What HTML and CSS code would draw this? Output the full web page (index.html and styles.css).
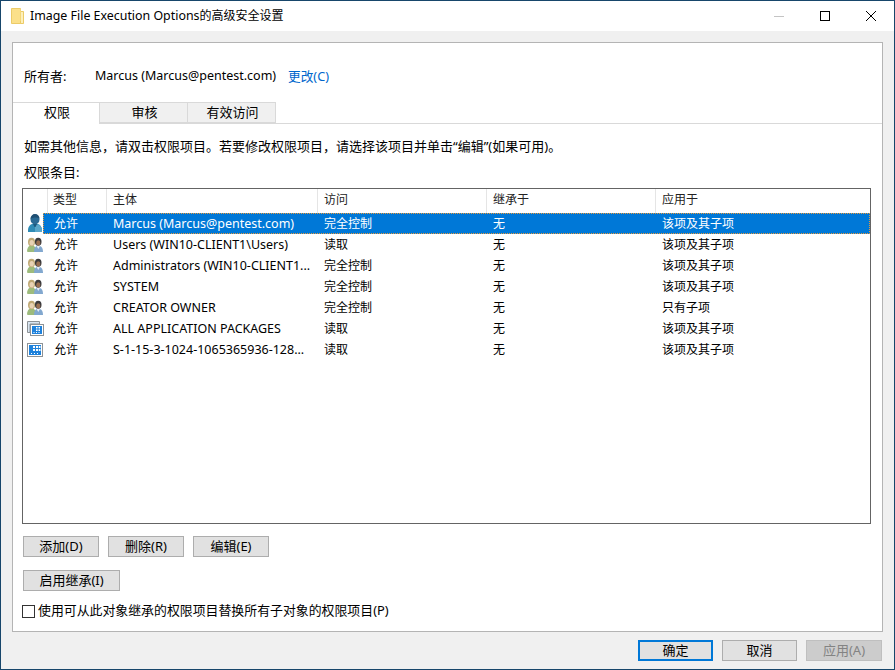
FILE: index.html
```html
<!DOCTYPE html>
<html lang="zh">
<head>
<meta charset="utf-8">
<title>Image File Execution Options的高级安全设置</title>
<link rel="stylesheet" href="styles.css">
</head>
<body>
<svg class="defs" width="0" height="0" aria-hidden="true">
  <defs>
    <symbol id="ico-user" viewBox="0 0 14 18">
      <path d="M0 18c-.3-4 1-7 4-8h6c3 1 4.300 4 4 8z" fill="#2e8bb5"/>
      <path d="M7 11v7h7c.3-3.500-1-6-3.500-7.500z" fill="#5aa7c9"/>
      <ellipse cx="7" cy="5.500" rx="4.500" ry="5" fill="#2a6a94"/>
      <path d="M2.500 5c0-3 2-5 4.500-5s4.500 2 4.500 4.500c-2.500-1.500-6-1.500-9 .5z" fill="#1f4f73"/>
      <path d="M5 10h4l-1.500 3h-1z" fill="#1d5a80"/>
    </symbol>
    <symbol id="ico-group" viewBox="0 0 16 16">
      <path d="M0 14.500c0-3.500 1.500-5.500 3-6h3c2 .5 3 2.500 3 6l-1 .5H1z" fill="#9dbb7c"/>
      <ellipse cx="4.500" cy="5" rx="3.500" ry="4.300" fill="#bfa873"/>
      <ellipse cx="4.700" cy="5.800" rx="2.200" ry="2.800" fill="#e8d2b4"/>
      <path d="M7 15c0-3.500 1-5.500 2.500-6h3.500c2 .5 3 2.500 3 6z" fill="#82a8cf"/>
      <path d="M9.500 9h3.500l-1.700 3z" fill="#e4ecf3"/>
      <ellipse cx="11.200" cy="4.800" rx="3.300" ry="4" fill="#3b3a3c"/>
      <ellipse cx="11.300" cy="5.900" rx="2.100" ry="2.600" fill="#9a7052"/>
    </symbol>
    <symbol id="ico-apps" viewBox="0 0 17 16">
      <path d="M.5.500h12v2.500H3v8.500H.5z" fill="#d9e6f2" stroke="#8d9296"/>
      <rect x="3.500" y="3.500" width="13" height="11" fill="#fff" stroke="#8d9296"/>
      <rect x="5" y="5" width="10" height="8" fill="#1e82dc"/>
      <path d="M9 6h1.500v1.500H9zM11.500 6H13v1.500h-1.500zM9 8.500h1.500V10H9zM11.500 8.500H13V10h-1.500zM6.500 11h1v1h-1zM9 11h1v1H9zM11.500 11h1v1h-1z" fill="#fff"/>
    </symbol>
    <symbol id="ico-sid" viewBox="0 0 16 16">
      <rect x=".5" y="1.500" width="15" height="13" fill="#fff" stroke="#8d9296"/>
      <rect x="2" y="3" width="12" height="10" fill="#1e82dc"/>
      <path d="M6 4h2v2H6zM9 4h2v2H9zM11.800 4h1.700v2h-1.700zM6 7h2v2H6zM9 7h2v2H9zM11.800 7h1.700v2h-1.700z" fill="#fff"/>
      <path d="M4 11h1v1H4zM7 11h1v1H7zM10 11h1v1h-1z" fill="#fff"/>
    </symbol>
  </defs>
</svg>
<div class="window">
  <header class="titlebar">
    <svg class="folder" width="13" height="16" viewBox="0 0 13 16">
      <path d="M.5.500h9v3h2.500v12H.5z" fill="#fbe08a" stroke="#eccb68"/>
      <path d="M9.500 3.500h3v12h-3z" fill="#fdf0bb" stroke="#eccb68"/>
      <path d="M1 1h8.500v12H1z" fill="#fbe08a"/>
    </svg>
    <span class="title"><span class="lat-title">Image File Execution Options</span>的高级安全设置</span>
    <div class="controls">
      <svg class="ctl" width="46" height="31" viewBox="0 0 46 31"><path d="M18 15.500h10" stroke="#c4c4c4"/></svg>
      <svg class="ctl" width="46" height="31" viewBox="0 0 46 31"><rect x="18.500" y="10.500" width="9" height="9" fill="none" stroke="#000"/></svg>
      <svg class="ctl" width="46" height="31" viewBox="0 0 46 31"><path d="M18 10l10 10M28 10L18 20" stroke="#000" fill="none"/></svg>
    </div>
  </header>
  <main class="body">
    <section class="panel">
      <div class="owner">
        <span class="owner-label">所有者:</span>
        <span class="owner-name">Marcus (Marcus@pentest.com)</span>
        <span class="owner-link">更改(C)</span>
      </div>
      <nav class="tabs">
        <span class="tab tab-active">权限</span>
        <span class="tab">审核</span>
        <span class="tab">有效访问</span>
      </nav>
      <div class="content">
        <p class="hint">如需其他信息，请双击权限项目。若要修改权限项目，请选择该项目并单击“编辑”(如果可用)。</p>
        <p class="entries">权限条目:</p>
        <div class="list">
          <div class="row head">
            <span class="cell-ico"></span><span>类型</span><span>主体</span><span>访问</span><span>继承于</span><span>应用于</span>
          </div>
          <div class="row item">
            <span class="cell-ico"><svg class="ico-user" width="14" height="18"><use href="#ico-user"/></svg></span>
            <div class="sel"><span>允许</span><span class="lat">Marcus (Marcus@pentest.com)</span><span>完全控制</span><span>无</span><span>该项及其子项</span></div>
          </div>
          <div class="row item">
            <span class="cell-ico"><svg width="16" height="16"><use href="#ico-group"/></svg></span>
            <span>允许</span><span class="lat">Users (WIN10-CLIENT1\Users)</span><span>读取</span><span>无</span><span>该项及其子项</span>
          </div>
          <div class="row item">
            <span class="cell-ico"><svg width="16" height="16"><use href="#ico-group"/></svg></span>
            <span>允许</span><span class="lat">Administrators (WIN10-CLIENT1...</span><span>完全控制</span><span>无</span><span>该项及其子项</span>
          </div>
          <div class="row item">
            <span class="cell-ico"><svg width="16" height="16"><use href="#ico-group"/></svg></span>
            <span>允许</span><span class="lat">SYSTEM</span><span>完全控制</span><span>无</span><span>该项及其子项</span>
          </div>
          <div class="row item">
            <span class="cell-ico"><svg width="16" height="16"><use href="#ico-group"/></svg></span>
            <span>允许</span><span class="lat">CREATOR OWNER</span><span>完全控制</span><span>无</span><span>只有子项</span>
          </div>
          <div class="row item">
            <span class="cell-ico"><svg width="17" height="16"><use href="#ico-apps"/></svg></span>
            <span>允许</span><span class="lat">ALL APPLICATION PACKAGES</span><span>读取</span><span>无</span><span>该项及其子项</span>
          </div>
          <div class="row item">
            <span class="cell-ico"><svg width="16" height="16"><use href="#ico-sid"/></svg></span>
            <span>允许</span><span class="lat">S-1-15-3-1024-1065365936-128...</span><span>读取</span><span>无</span><span>该项及其子项</span>
          </div>
        </div>
        <div class="actions">
          <button class="btn">添加(D)</button>
          <button class="btn">删除(R)</button>
          <button class="btn">编辑(E)</button>
        </div>
        <button class="btn btn-wide">启用继承(I)</button>
        <label class="check"><span class="box"></span><span class="check-text">使用可从此对象继承的权限项目替换所有子对象的权限项目(P)</span></label>
      </div>
    </section>
    <footer class="footer">
      <button class="btn btn-foot btn-default">确定</button>
      <button class="btn btn-foot">取消</button>
      <button class="btn btn-foot btn-disabled">应用(A)</button>
    </footer>
  </main>
</div>
</body>
</html>
```
FILE: styles.css
```css
* { box-sizing: border-box; }
html, body { margin: 0; padding: 0; }
body {
  width: 895px;
  height: 670px;
  overflow: hidden;
  font: 13px/16px "Noto Sans", "Noto Sans CJK SC", sans-serif;
  color: #000;
}
.defs { display: block; height: 0; }
.window {
  width: 895px;
  height: 670px;
  border: 1px solid #17466b;
  display: flex;
  flex-direction: column;
  background: #f0f0f0;
}
.titlebar {
  height: 30px;
  background: #fff;
  display: flex;
  align-items: center;
  padding-left: 10px;
  flex: none;
}
.folder { margin-right: 6px; }
.title { flex: 1; font-size: 12px; }
.lat-title { font-size: 12.4px; }
.controls { display: flex; }
.ctl { display: block; }
.body {
  flex: 1;
  display: flex;
  flex-direction: column;
  padding: 11px 11px 0;
}
.panel {
  height: 590px;
  width: 871px;
  background: #fff;
  border: 1px solid #b4b4b4;
  display: flex;
  flex-direction: column;
}
.owner {
  display: flex;
  height: 16px;
  margin-top: 25px;
  padding-left: 11px;
  align-items: center;
}
.owner-label { width: 71px; }
.owner-name { width: 193px; font-size: 12.5px; }
.owner-link { color: #0066cc; font-size: 12.7px; }
.tabs {
  display: flex;
  margin-top: 18px;
  height: 22px;
  border-bottom: 1px solid #d9d9d9;
}
.tab {
  width: 88px;
  height: 21px;
  border: 1px solid #d9d9d9;
  border-left: 0;
  background: #f0f0f0;
  text-align: center;
  line-height: 19px;
  padding-left: 2px;
}
.tab-active { width: 87px; height: 22px; background: #fff; border-bottom: 0; }
.content {
  padding: 0 10px 0 9px;
  display: flex;
  flex-direction: column;
  align-items: flex-start;
}
.hint { margin: 14px 0 0 2px; height: 16px; white-space: nowrap; }
.entries { margin: 10px 0 0 2px; height: 16px; }
.list {
  margin-top: 8px;
  width: 849px;
  height: 336px;
  border: 1px solid #646464;
  background: #fff;
  font-size: 12px;
}
.lat { font-size: 12.5px; }
.row, .sel {
  display: grid;
  align-items: center;
  white-space: nowrap;
}
.row { grid-template-columns: 24px 59px 211px 169px 169px 215px; height: 21px; }
.row > span:not(.cell-ico), .sel > span { padding-left: 7px; }
.head { height: 24px; color: #222; }
.head > span { height: 24px; line-height: 22px; }
.head > span:not(.cell-ico) { border-left: 1px solid #e5e5e5; padding-left: 6px; }
.head > span:nth-child(2) { padding-left: 5px; }
.cell-ico { display: flex; justify-content: center; align-items: center; height: 21px; }
.head .cell-ico { height: 24px; }
.cell-ico svg { display: block; }
.ico-user { margin-top: -1px; }
.sel {
  grid-column: 2 / -1;
  grid-template-columns: 59px 211px 169px 169px 215px;
  margin-left: -4px;
  padding-left: 4px;
  height: 21px;
  background: #0078d7;
  color: #fff;
  outline: 1px dotted #e89a3c;
  outline-offset: -1px;
}
.actions { display: flex; gap: 9px; margin: 12px 0 0 1px; }
.btn {
  font: inherit;
  color: #000;
  width: 76px;
  height: 21px;
  padding: 0 0 2px;
  border: 1px solid #adadad;
  background: #e1e1e1;
  display: block;
}
.btn-wide { width: 97px; margin: 13px 0 0 1px; }
.check { display: flex; align-items: center; margin-top: 12px; height: 16px; }
.check-text { font-size: 12.9px; margin-top: -2px; }
.box {
  width: 13px;
  height: 13px;
  border: 1px solid #333;
  background: #fff;
  margin-right: 3px;
}
.footer {
  display: flex;
  gap: 9px;
  justify-content: flex-end;
  margin: 8px 1px 0 0;
}
.btn-foot { width: 75px; }
.btn-default { border: 2px solid #0078d7; }
.btn-disabled { width: 76px; background: #ccc; border-color: #bfbfbf; color: #838383; }
```
